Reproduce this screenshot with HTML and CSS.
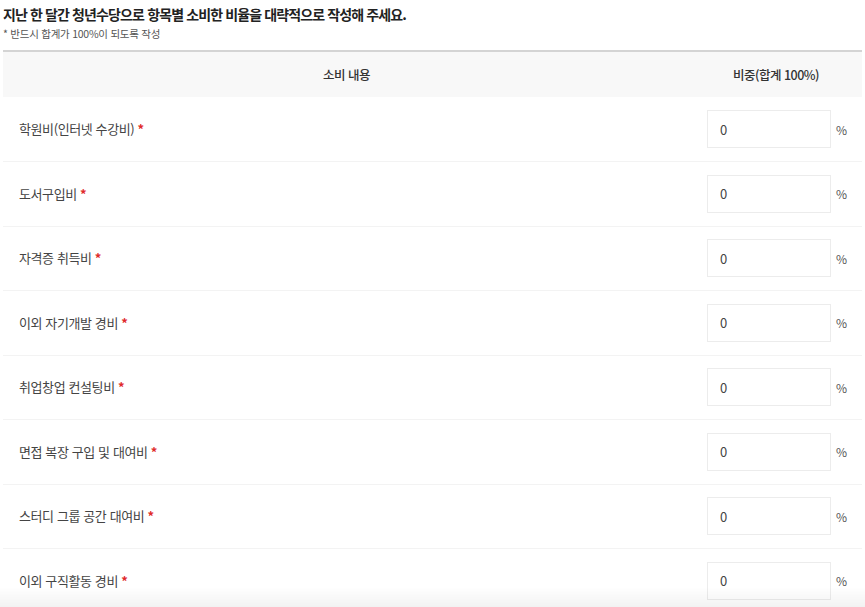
FILE: index.html
```html
<!DOCTYPE html>
<html lang="ko">
<head>
  <meta charset="UTF-8" />
  <meta name="viewport" content="width=device-width, initial-scale=1" />
  <title>청년수당 소비 비율</title>
  <link rel="stylesheet" href="styles.css">
</head>
<body>
  <div class="survey">
    <h3 class="survey-title">지난 한 달간 청년수당으로 항목별 소비한 비율을 대략적으로 작성해 주세요.</h3>
    <p class="survey-note">* 반드시 합계가 100%이 되도록 작성</p>

    <table class="ratio-table">
      <thead>
        <tr>
          <th>소비 내용</th>
          <th class="col-ratio">비중(합계 100%)</th>
        </tr>
      </thead>
      <tbody>
        <tr>
          <td>학원비(인터넷 수강비) <span class="req">*</span></td>
          <td class="col-ratio"><input type="text" value="0" /><span class="unit">%</span></td>
        </tr>
        <tr>
          <td>도서구입비 <span class="req">*</span></td>
          <td class="col-ratio"><input type="text" value="0" /><span class="unit">%</span></td>
        </tr>
        <tr>
          <td>자격증 취득비 <span class="req">*</span></td>
          <td class="col-ratio"><input type="text" value="0" /><span class="unit">%</span></td>
        </tr>
        <tr>
          <td>이외 자기개발 경비 <span class="req">*</span></td>
          <td class="col-ratio"><input type="text" value="0" /><span class="unit">%</span></td>
        </tr>
        <tr>
          <td>취업창업 컨설팅비 <span class="req">*</span></td>
          <td class="col-ratio"><input type="text" value="0" /><span class="unit">%</span></td>
        </tr>
        <tr>
          <td>면접 복장 구입 및 대여비 <span class="req">*</span></td>
          <td class="col-ratio"><input type="text" value="0" /><span class="unit">%</span></td>
        </tr>
        <tr>
          <td>스터디 그룹 공간 대여비 <span class="req">*</span></td>
          <td class="col-ratio"><input type="text" value="0" /><span class="unit">%</span></td>
        </tr>
        <tr>
          <td>이외 구직활동 경비 <span class="req">*</span></td>
          <td class="col-ratio"><input type="text" value="0" /><span class="unit">%</span></td>
        </tr>
      </tbody>
    </table>
  </div>
  <div class="bottom-fade"></div>
</body>
</html>
```

FILE: styles.css
```css
* {
  margin: 0;
  padding: 0;
  box-sizing: border-box;
  font-family: 'Noto Sans CJK KR', 'Noto Sans', sans-serif;
}

body {
  background: #fff;
  color: #333;
}

.survey {
  padding: 4px 3px 0 3px;
}

.survey-title {
  font-size: 14px;
  font-weight: 700;
  letter-spacing: -0.88px;
  line-height: 20px;
  color: #222;
}

.survey-note {
  font-size: 10.5px;
  letter-spacing: -0.25px;
  line-height: 16px;
  color: #555;
  margin-top: 2px;
}

.ratio-table {
  width: 100%;
  margin-top: 8px;
  border-collapse: collapse;
  border-top: 2px solid #d4d4d4;
}

.ratio-table th {
  height: 46px;
  background: #f8f8f8;
  font-size: 12.5px;
  font-weight: 500;
  letter-spacing: -0.5px;
  color: #333;
  text-align: center;
}

.ratio-table td {
  height: 64.5px;
  padding-left: 16px;
  padding-bottom: 1px;
  font-size: 13px;
  letter-spacing: -0.4px;
  color: #444;
  border-bottom: 1px solid #f3f3f3;
}

.ratio-table .col-ratio {
  width: 172px;
}

.ratio-table td.col-ratio {
  padding-left: 17px;
  padding-bottom: 0;
  white-space: nowrap;
}

.req {
  color: #e02b2b;
  font-weight: 700;
}

input[type="text"] {
  width: 124px;
  height: 38px;
  padding: 0 12px;
  border: 1px solid #ececec;
  background: #fff;
  font-size: 13px;
  color: #444;
  vertical-align: middle;
}

.unit {
  display: inline-block;
  margin-left: 5px;
  font-size: 12px;
  color: #555;
  vertical-align: middle;
}

.bottom-fade {
  position: fixed;
  left: 0;
  right: 0;
  bottom: 0;
  height: 20px;
  background: linear-gradient(rgba(0, 0, 0, 0), rgba(0, 0, 0, 0.05));
  pointer-events: none;
}
```
